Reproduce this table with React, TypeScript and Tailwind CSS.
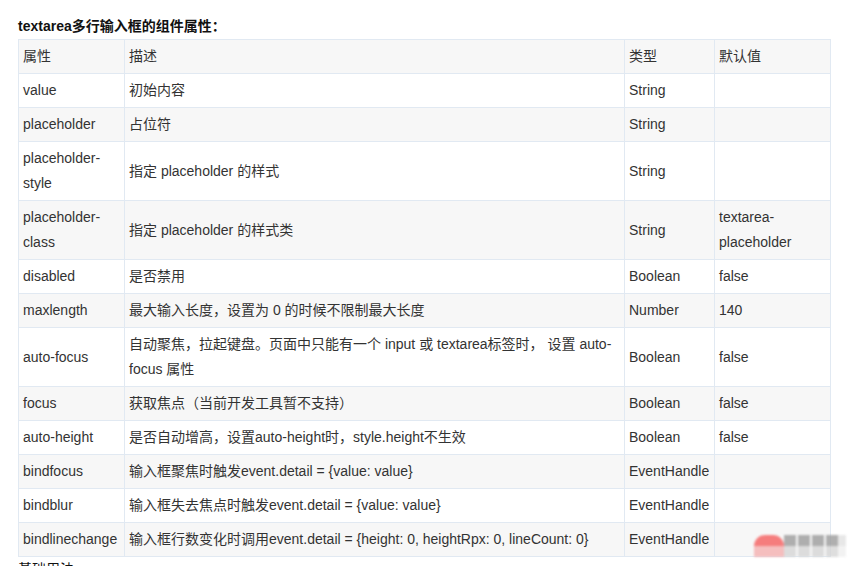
import React from "react";

const rows: [string, string, string, string][] = [
  ["value", "初始内容", "String", ""],
  ["placeholder", "占位符", "String", ""],
  ["placeholder-style", "指定 placeholder 的样式", "String", ""],
  ["placeholder-class", "指定 placeholder 的样式类", "String", "textarea-placeholder"],
  ["disabled", "是否禁用", "Boolean", "false"],
  ["maxlength", "最大输入长度，设置为 0 的时候不限制最大长度", "Number", "140"],
  [
    "auto-focus",
    "自动聚焦，拉起键盘。页面中只能有一个 input 或 textarea标签时， 设置 auto-focus 属性",
    "Boolean",
    "false",
  ],
  ["focus", "获取焦点（当前开发工具暂不支持）", "Boolean", "false"],
  ["auto-height", "是否自动增高，设置auto-height时，style.height不生效", "Boolean", "false"],
  ["bindfocus", "输入框聚焦时触发event.detail = {value: value}", "EventHandle", ""],
  ["bindblur", "输入框失去焦点时触发event.detail = {value: value}", "EventHandle", ""],
  [
    "bindlinechange",
    "输入框行数变化时调用event.detail = {height: 0, heightRpx: 0, lineCount: 0}",
    "EventHandle",
    "",
  ],
];

const cell = "border border-[#e1e9f2] px-[4px] py-[4px] align-middle";

export default function App() {
  return (
    <div
      className="relative w-[861px] h-[581px] bg-white text-[#333] text-[14px] pl-[18px] pt-[16px] overflow-hidden"
      style={{ fontFamily: '"Liberation Sans", Arial, "Noto Sans CJK SC", sans-serif' }}
    >
      <div className="font-bold leading-[20px] text-[#111] mb-[3px]">textarea多行输入框的组件属性：</div>
      <table className="table-fixed border-collapse w-[812px] leading-[25px]">
        <colgroup>
          <col className="w-[106px]" />
          <col className="w-[500px]" />
          <col className="w-[90px]" />
          <col className="w-[116px]" />
        </colgroup>
        <thead>
          <tr className="bg-[#f7f7f7]">
            <th className={`${cell} text-left font-normal`}>属性</th>
            <th className={`${cell} text-left font-normal`}>描述</th>
            <th className={`${cell} text-left font-normal`}>类型</th>
            <th className={`${cell} text-left font-normal`}>默认值</th>
          </tr>
        </thead>
        <tbody>
          {rows.map((r, i) => (
            <tr key={r[0]} className={i % 2 === 1 ? "bg-[#f7f7f7]" : "bg-white"}>
              <td className={cell}>{r[0]}</td>
              <td className={cell}>{r[1]}</td>
              <td className={cell}>{r[2]}</td>
              <td className={cell}>{r[3]}</td>
            </tr>
          ))}
        </tbody>
      </table>
      {/* next heading, cut off by the screenshot's lower edge */}
      <div className="h-[4px] mt-[5px] overflow-hidden leading-[14px] text-[#111]">基础用法</div>

      {/* blurred watermark in the corner */}
      <div className="absolute left-[754px] top-[535px] flex blur-[1px] opacity-80">
        <div className="flex flex-col">
          <div className="w-[30px] h-[11px] bg-[#f55f5f] rounded-t-full" />
          <div className="w-[30px] h-[11px] bg-[#f5b0b0]" />
        </div>
        <div className="flex gap-[2px]">
          {[0, 1, 2, 3].map((k) => (
            <div key={k} className="flex flex-col">
              <div className="w-[12px] h-[11px] bg-[#9c9c9c]" />
              <div className="w-[12px] h-[11px] bg-[#d6d6d6]" />
            </div>
          ))}
        </div>
        <div className="flex flex-col">
          <div className="w-[8px] h-[11px] bg-[#e2e2e2]" />
          <div className="w-[8px] h-[11px] bg-[#f0f0f0]" />
        </div>
      </div>
    </div>
  );
}
